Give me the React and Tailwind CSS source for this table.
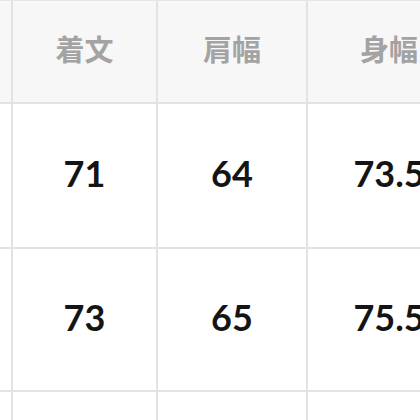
import React from 'react';

const headers = ['', '着文', '肩幅', '身幅'];
const rows = [
  ['', '71', '64', '73.5'],
  ['', '73', '65', '75.5'],
  ['', '', '', ''],
];

export default function App() {
  return (
    <div className="w-[420px] h-[420px] overflow-hidden bg-white">
      <div className="grid grid-cols-[13px_145px_150px_164px] grid-rows-[103px_145px_143px_143px] w-[472px] border-t border-[#e6e6e6]">
        {headers.map((h, i) => (
          <div
            key={`h${i}`}
            className="bg-[#f7f7f7] border-r-2 border-b-2 border-[#e3e3e3] flex items-center justify-center pb-[6px] text-[29px] font-bold text-[#a3a3a3] whitespace-nowrap"
            style={{ fontFamily: '"Noto Sans CJK JP", "Noto Sans", sans-serif' }}
          >
            {h}
          </div>
        ))}
        {rows.map((r, ri) =>
          r.map((v, ci) => (
            <div
              key={`r${ri}c${ci}`}
              className="bg-white border-r-2 border-b-2 border-[#e3e3e3] flex items-center justify-center pb-[6px] text-[36px] font-bold text-[#141414] whitespace-nowrap"
              style={{ fontFamily: 'Lato, "Noto Sans", sans-serif' }}
            >
              {v}
            </div>
          ))
        )}
      </div>
    </div>
  );
}
